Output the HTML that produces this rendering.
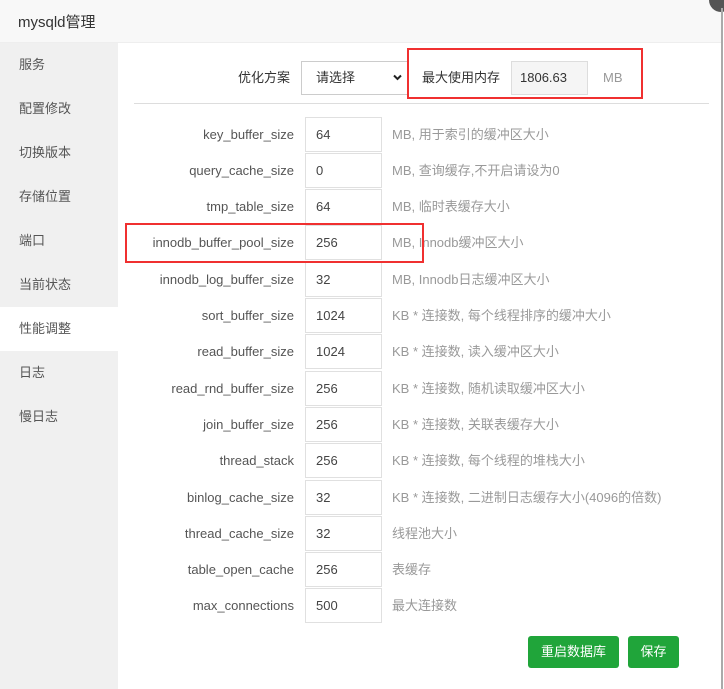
<!DOCTYPE html>
<html><head><meta charset="utf-8"><style>
*{margin:0;padding:0;box-sizing:border-box}
body{width:724px;height:689px;overflow:hidden;background:#fff;font-family:"Liberation Sans","Noto Sans CJK SC",sans-serif;font-size:13px;color:#555;position:relative}
.hdr{position:absolute;left:0;top:0;width:722px;height:43px;background:#f8f8f8;border-bottom:1px solid #eee;font-size:15px;color:#333;padding:11px 0 0 18px}
.close{position:absolute;left:709px;top:-12px;width:24px;height:24px;border-radius:50%;background:#555}
.vline{position:absolute;left:721px;top:8px;width:2px;height:681px;background:#aaa}
.side{position:absolute;left:0;top:43px;width:118px;height:646px;background:#f0f0f0}
.side div{height:44px;line-height:44px;padding-left:19px;color:#555;font-size:13px}
.side .act{background:#fff}
.a{position:absolute}
.inp{position:absolute;left:305px;width:77px;height:35px;border:1px solid #e0e0e0;padding-left:10px;line-height:33px;color:#444}
.lbl{position:absolute;right:430px;color:#555;line-height:35px;white-space:nowrap}
.desc{position:absolute;left:392px;color:#999;line-height:35px;white-space:nowrap}
.red{position:absolute;border:2px solid #f03030}
.btn{position:absolute;background:#20a53a;color:#fff;border-radius:3px;text-align:center;line-height:32px;height:32px}
</style></head><body>
<div class="hdr">mysqld管理</div>
<div class="close"></div>
<div class="vline"></div>
<div class="side"><div>服务</div><div>配置修改</div><div>切换版本</div><div>存储位置</div><div>端口</div><div>当前状态</div><div class="act">性能调整</div><div>日志</div><div>慢日志</div></div>

<div class="a" style="left:238px;top:61px;line-height:33px;color:#333">优化方案</div>
<div class="a" style="left:301px;top:61px;width:107px;height:34px;border:1px solid #ccc;line-height:32px;padding-left:14px;color:#333">请选择<svg style="position:absolute;right:5px;top:12px" width="9" height="7" viewBox="0 0 9 7"><path d="M1 1.5 L4.5 5 L8 1.5" fill="none" stroke="#222" stroke-width="2"/></svg></div>
<div class="a" style="left:422px;top:61px;line-height:33px;color:#333">最大使用内存</div>
<div class="a" style="left:511px;top:61px;width:77px;height:34px;border:1px solid #ddd;background:#f5f5f5;line-height:32px;padding-left:8px;color:#333">1806.63</div>
<div class="a" style="left:603px;top:61px;line-height:33px;color:#999">MB</div>
<div class="red" style="left:407px;top:48px;width:236px;height:51px"></div>
<div class="a" style="left:134px;top:103px;width:575px;height:1px;background:#ddd"></div>

<div class="lbl" style="top:117px">key_buffer_size</div><div class="inp" style="top:117px">64</div><div class="desc" style="top:117px">MB, 用于索引的缓冲区大小</div>
<div class="lbl" style="top:153px">query_cache_size</div><div class="inp" style="top:153px">0</div><div class="desc" style="top:153px">MB, 查询缓存,不开启请设为0</div>
<div class="lbl" style="top:189px">tmp_table_size</div><div class="inp" style="top:189px">64</div><div class="desc" style="top:189px">MB, 临时表缓存大小</div>
<div class="lbl" style="top:225px">innodb_buffer_pool_size</div><div class="inp" style="top:225px">256</div><div class="desc" style="top:225px">MB, Innodb缓冲区大小</div>
<div class="lbl" style="top:262px">innodb_log_buffer_size</div><div class="inp" style="top:262px">32</div><div class="desc" style="top:262px">MB, Innodb日志缓冲区大小</div>
<div class="lbl" style="top:298px">sort_buffer_size</div><div class="inp" style="top:298px">1024</div><div class="desc" style="top:298px">KB * 连接数, 每个线程排序的缓冲大小</div>
<div class="lbl" style="top:334px">read_buffer_size</div><div class="inp" style="top:334px">1024</div><div class="desc" style="top:334px">KB * 连接数, 读入缓冲区大小</div>
<div class="lbl" style="top:371px">read_rnd_buffer_size</div><div class="inp" style="top:371px">256</div><div class="desc" style="top:371px">KB * 连接数, 随机读取缓冲区大小</div>
<div class="lbl" style="top:407px">join_buffer_size</div><div class="inp" style="top:407px">256</div><div class="desc" style="top:407px">KB * 连接数, 关联表缓存大小</div>
<div class="lbl" style="top:443px">thread_stack</div><div class="inp" style="top:443px">256</div><div class="desc" style="top:443px">KB * 连接数, 每个线程的堆栈大小</div>
<div class="lbl" style="top:480px">binlog_cache_size</div><div class="inp" style="top:480px">32</div><div class="desc" style="top:480px">KB * 连接数, 二进制日志缓存大小(4096的倍数)</div>
<div class="lbl" style="top:516px">thread_cache_size</div><div class="inp" style="top:516px">32</div><div class="desc" style="top:516px">线程池大小</div>
<div class="lbl" style="top:552px">table_open_cache</div><div class="inp" style="top:552px">256</div><div class="desc" style="top:552px">表缓存</div>
<div class="lbl" style="top:588px">max_connections</div><div class="inp" style="top:588px">500</div><div class="desc" style="top:588px">最大连接数</div>
<div class="red" style="left:125px;top:223px;width:299px;height:40px"></div>

<div class="btn" style="left:528px;top:636px;width:91px">重启数据库</div>
<div class="btn" style="left:628px;top:636px;width:51px">保存</div>
</body></html>
